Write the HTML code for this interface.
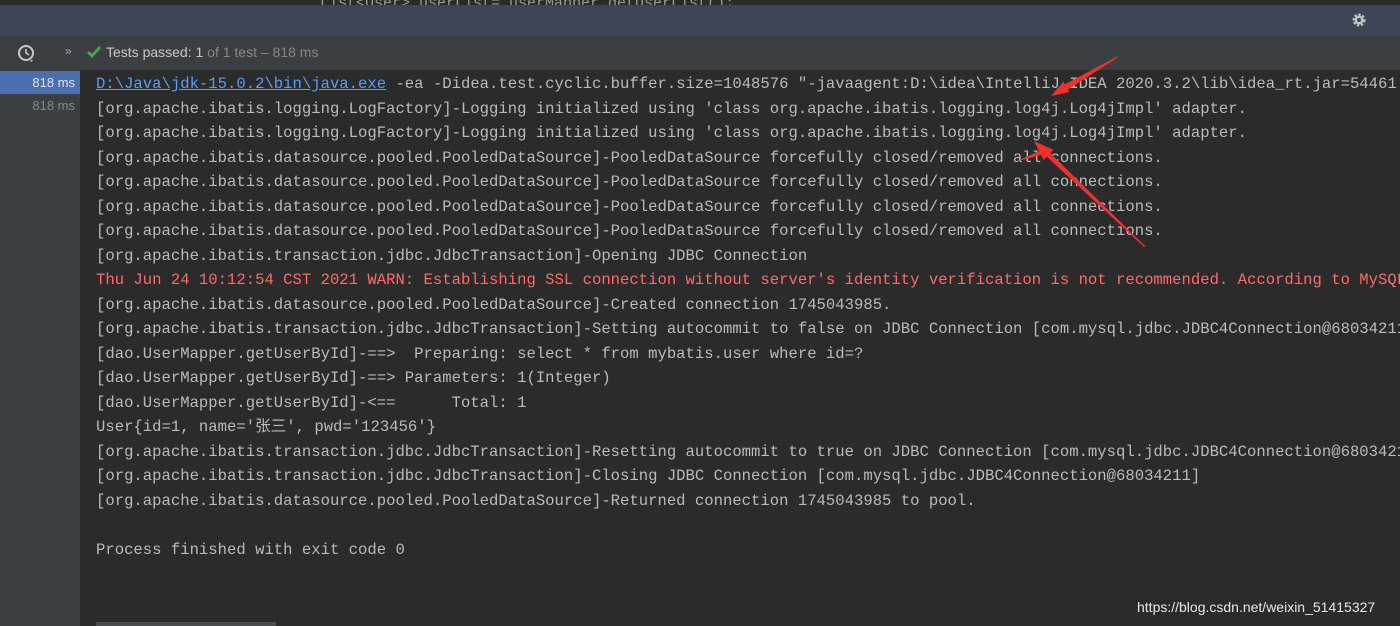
<!DOCTYPE html>
<html><head><meta charset="utf-8"><style>
html,body{margin:0;padding:0;width:1400px;height:626px;overflow:hidden;background:#2b2b2b;font-family:"Liberation Sans",sans-serif}
.top{position:absolute;left:0;top:0;width:1400px;height:5px;background:#2b2b2b}
.bar{position:absolute;left:0;top:5px;width:1400px;height:31px;background:#3d4654}
.tool{position:absolute;left:0;top:36px;width:1400px;height:34px;background:#3c3f41}
.left{position:absolute;left:0;top:70px;width:80px;height:556px;background:#3c3f41}
.sel{position:absolute;left:0;top:71px;width:80px;height:23px;background:#4b6eaf}
.ms{position:absolute;left:0;width:75px;text-align:right;font-size:13px}
.con{position:absolute;left:96px;top:72px;font-family:"Liberation Mono","Noto Sans CJK SC",monospace;font-size:15.6px;line-height:24.5px;color:#bbbbbb;white-space:pre}
.l{color:#589df6;text-decoration:underline}
.r{color:#ff6b68}
</style></head><body>
<div class="top"></div>
<div class="bar"></div>
<div style="position:absolute;left:320px;top:0;font-family:'Liberation Mono',monospace;font-size:15px;color:#999;line-height:8px;height:5px;overflow:hidden">    List&lt;User&gt; userList= userMapper.getUserList();</div>
<svg style="position:absolute;left:1351px;top:12px" width="16" height="16" viewBox="0 0 16 16"><circle cx="8" cy="8" r="5" fill="none" stroke="#c0c4c8" stroke-width="3" stroke-dasharray="2.2 1.6"/><circle cx="8" cy="8" r="4.5" fill="#c0c4c8"/><circle cx="8" cy="8" r="2" fill="#3d4654"/></svg>
<div class="tool"></div>
<svg style="position:absolute;left:17px;top:44px" width="20" height="20" viewBox="0 0 20 20"><circle cx="9" cy="9" r="7" fill="none" stroke="#c8c8c8" stroke-width="2"/><path d="M9 5v4l3 2" fill="none" stroke="#c8c8c8" stroke-width="1.6"/><path d="M13 16l3 0-1.5 2z" fill="#c8c8c8"/></svg>
<div style="position:absolute;left:65px;top:44px;color:#aaa;font-size:12px">»</div>
<svg style="position:absolute;left:86px;top:45px" width="16" height="14" viewBox="0 0 16 14"><path d="M2 7l4 4 8-9" fill="none" stroke="#4fa84d" stroke-width="2.8"/></svg>
<div style="position:absolute;left:106px;top:44px;font-size:14px;color:#c8c8c8">Tests passed: 1 <span style="color:#888">of 1 test – 818 ms</span></div>
<div class="left"></div>
<div class="sel"></div>
<div class="ms" style="top:75px;color:#dde4f0">818 ms</div>
<div class="ms" style="top:98px;color:#888">818 ms</div>
<div class="con"><span class="l">D:\Java\jdk-15.0.2\bin\java.exe</span> -ea -Didea.test.cyclic.buffer.size=1048576 "-javaagent:D:\idea\IntelliJ IDEA 2020.3.2\lib\idea_rt.jar=54461:
[org.apache.ibatis.logging.LogFactory]-Logging initialized using 'class org.apache.ibatis.logging.log4j.Log4jImpl' adapter.
[org.apache.ibatis.logging.LogFactory]-Logging initialized using 'class org.apache.ibatis.logging.log4j.Log4jImpl' adapter.
[org.apache.ibatis.datasource.pooled.PooledDataSource]-PooledDataSource forcefully closed/removed all connections.
[org.apache.ibatis.datasource.pooled.PooledDataSource]-PooledDataSource forcefully closed/removed all connections.
[org.apache.ibatis.datasource.pooled.PooledDataSource]-PooledDataSource forcefully closed/removed all connections.
[org.apache.ibatis.datasource.pooled.PooledDataSource]-PooledDataSource forcefully closed/removed all connections.
[org.apache.ibatis.transaction.jdbc.JdbcTransaction]-Opening JDBC Connection
<span class="r">Thu Jun 24 10:12:54 CST 2021 WARN: Establishing SSL connection without server's identity verification is not recommended. According to MySQL</span>
[org.apache.ibatis.datasource.pooled.PooledDataSource]-Created connection 1745043985.
[org.apache.ibatis.transaction.jdbc.JdbcTransaction]-Setting autocommit to false on JDBC Connection [com.mysql.jdbc.JDBC4Connection@68034211]
[dao.UserMapper.getUserById]-==&gt;  Preparing: select * from mybatis.user where id=?
[dao.UserMapper.getUserById]-==&gt; Parameters: 1(Integer)
[dao.UserMapper.getUserById]-&lt;==      Total: 1
User{id=1, name='张三', pwd='123456'}
[org.apache.ibatis.transaction.jdbc.JdbcTransaction]-Resetting autocommit to true on JDBC Connection [com.mysql.jdbc.JDBC4Connection@68034211]
[org.apache.ibatis.transaction.jdbc.JdbcTransaction]-Closing JDBC Connection [com.mysql.jdbc.JDBC4Connection@68034211]
[org.apache.ibatis.datasource.pooled.PooledDataSource]-Returned connection 1745043985 to pool.

Process finished with exit code 0</div>
<svg style="position:absolute;left:0;top:0" width="1400" height="626"><g fill="#f0302a">
<polygon points="1051,96 1069.4,92 1067.9,89.5 1117.5,57.6 1116.8,56.6 1064.9,84.3 1063.4,81.8"/>
<polygon points="1034,141 1053.4,149.8 1050.2,153.1 1145.5,246.5 1144.5,247.3 1046.8,156.7 1043.6,160"/>
<polygon points="1017,161 1046,148 1048,153 1030,158"/>
</g></svg>
<div style="position:absolute;left:96px;top:622px;width:180px;height:4px;background:#4a4d50"></div>
<div style="position:absolute;left:1137px;top:599px;font-size:14px;color:#e8e8e8">https://blog.csdn.net/weixin_51415327</div>
</body></html>
